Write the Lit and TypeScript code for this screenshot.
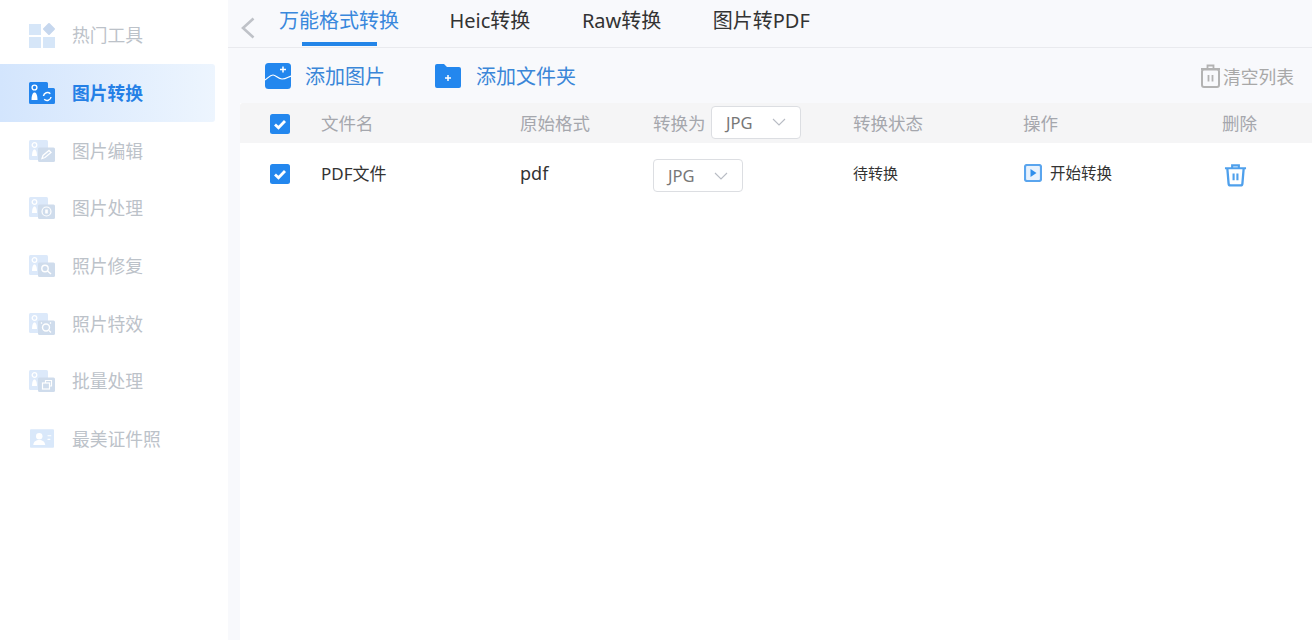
import { LitElement, html, css, svg } from "lit";
import { customElement } from "lit/decorators.js";

const tile = (c: string, inner: unknown) => svg`<svg class="ic" viewBox="0 0 26 22" width="26" height="22">
  <path d="M0 1.500A1.500 1.500 0 0 1 1.500 0h16A1.500 1.500 0 0 1 19 1.500V6h5.500A1.500 1.500 0 0 1 26 7.500V20.500a1.500 1.500 0 0 1-1.500 1.500h-23A1.500 1.500 0 0 1 0 20.500z" fill="${c}"/>${inner}</svg>`;

const base = (sub: unknown) => svg`<svg class="ic" viewBox="0 0 26 22" width="26" height="22">
  <rect x="0" y="0" width="19" height="20" rx="1.500" fill="#dce9fa"/>
  <circle cx="5.500" cy="5" r="2.300" fill="none" stroke="#fff" stroke-width="1.300"/>
  <path d="M3 16c0-4 1-6.500 2.500-6.500S8 12 8 16z" fill="#fff"/>
  <rect x="9" y="7.500" width="17" height="14.500" rx="1.500" fill="#cfdcec"/>${sub}</svg>`;

const icons: Record<string, unknown> = {
  hot: svg`<svg class="ic" viewBox="0 0 26 26" width="26" height="26">
    <rect x="0" y="2" width="12" height="11" fill="#d6e6f8"/><rect x="0" y="15" width="12" height="11" fill="#d6e6f8"/>
    <rect x="14" y="15" width="12" height="11" fill="#d6e6f8"/><rect x="15.500" y="2.500" width="9" height="9" rx="1" fill="#c6d7ee" transform="rotate(45 20 7)"/></svg>`,
  convert: tile("#2385ee", svg`
    <circle cx="5.500" cy="5.500" r="2.400" fill="none" stroke="#fff" stroke-width="1.400"/>
    <path d="M2.500 18c0-5 1.300-7.500 3-7.500s3 2.500 3 7.500z" fill="#fff"/>
    <path d="M14.500 14a4 4 0 0 1 6.800-2.300M22 15a4 4 0 0 1-6.800 2.300" fill="none" stroke="#fff" stroke-width="1.500"/>`),
  edit: base(svg`<path d="M13 18.500l1-3 6-5 2 2-6 5z" fill="none" stroke="#fff" stroke-width="1.300"/>`),
  process: base(svg`<circle cx="17.500" cy="14.500" r="4.500" fill="none" stroke="#fff" stroke-width="1.200"/><rect x="16.200" y="12.500" width="2.600" height="4" fill="#fff"/>`),
  repair: base(svg`<circle cx="16" cy="13.500" r="3.200" fill="none" stroke="#fff" stroke-width="1.400"/><path d="M18.500 16l3.500 3" stroke="#fff" stroke-width="1.600"/>`),
  effect: base(svg`<circle cx="17" cy="14.500" r="3.500" fill="none" stroke="#fff" stroke-width="1.400"/><path d="M20 17.500l2 2M21 10.500l1-1M13 10.500l-1-1" stroke="#fff" stroke-width="1.300"/>`),
  batch: base(svg`<rect x="13.500" y="13" width="7" height="6" fill="none" stroke="#fff" stroke-width="1.200"/><path d="M16.500 13v-2.500h6V16h-2" fill="none" stroke="#fff" stroke-width="1.200"/>`),
  id: svg`<svg class="ic id" viewBox="0 0 26 20" width="24" height="19">
    <rect width="26" height="20" rx="1" fill="#d9e8fa"/><circle cx="10" cy="7.500" r="3.500" fill="#fff"/>
    <path d="M3.500 17c.5-4 3-5.500 6.500-5.500s6 1.500 6.500 5.500z" fill="#fff"/><path d="M19 7h4M19 11h3" stroke="#fff" stroke-width="1.300"/></svg>`,
};

const MENU = [
  ["hot", "热门工具"], ["convert", "图片转换"], ["edit", "图片编辑"], ["process", "图片处理"],
  ["repair", "照片修复"], ["effect", "照片特效"], ["batch", "批量处理"], ["id", "最美证件照"],
];
const TABS = ["万能格式转换", "Heic转换", "Raw转换", "图片转PDF"];

const check = html`<svg class="check" viewBox="0 0 20 20" width="20" height="20">
  <rect width="20" height="20" rx="2.500" fill="#2387ee"/>
  <path d="M5 10.500l3.500 3.300L15 7" fill="none" stroke="#fff" stroke-width="2.800"/></svg>`;

const trash = (c: string, w: number, h: number) => html`<svg viewBox="0 0 24 24" width="${w}" height="${h}">
  <path d="M1 5h22M8.500 4.500V2h7v2.500" fill="none" stroke="${c}" stroke-width="2.200"/>
  <path d="M3.500 5.500l1.300 15.500a2 2 0 0 0 2 1.900h10.400a2 2 0 0 0 2-1.900L20.500 5.500" fill="none" stroke="${c}" stroke-width="2.400"/>
  <path d="M10 10.500v7M14 10.500v7" stroke="${c}" stroke-width="2.200"/></svg>`;

const clearIcon = html`<svg viewBox="0 0 19 24" width="19" height="24">
  <path d="M0 5h19M6.500 4.500V1.500h6v3" fill="none" stroke="#b3b3b3" stroke-width="1.800"/>
  <rect x="1" y="5.500" width="17" height="17.500" rx="2" fill="none" stroke="#b3b3b3" stroke-width="2"/>
  <path d="M7.500 11v6.500M11.500 11v6.500" stroke="#b3b3b3" stroke-width="1.800"/></svg>`;

const select = html`<div class="select"><span>JPG</span>
  <svg viewBox="0 0 14 8" width="14" height="8"><path d="M1 1l6 6 6-6" fill="none" stroke="#b8bcc4" stroke-width="1.100"/></svg></div>`;

@customElement("app-root")
export class AppRoot extends LitElement {
  static styles = css`
    :host { display: block; width: 1312px; height: 640px; overflow: hidden; background: #f8f9fc;
      font-family: "Noto Sans", "Noto Sans CJK SC", sans-serif; }
    .app { display: flex; height: 640px; }
    .side { width: 228px; flex: none; background: #fff; padding-top: 6.300px; box-sizing: border-box; }
    .item { width: 215px; height: 57.700px; display: flex; align-items: center; color: #bcc2c9; font-size: 17.750px; line-height: 24px; }
    .item.on { background: linear-gradient(90deg, #d3e5fd, #edf5fe); color: #2580e6; font-weight: 700; border-radius: 0 3px 3px 0; }
    .icbox { width: 72px; flex: none; padding-left: 29px; box-sizing: border-box; display: flex; }
    .ic { display: block; }
    .ic.id { margin-left: 1px; }
    .main { flex: 1; min-width: 0; display: flex; flex-direction: column; }
    .tabs { height: 47px; flex: none; display: flex; align-items: flex-start; border-bottom: 1px solid #e9eaee; }
    .back { width: 14px; margin: 17px 24px 0 13px; flex: none; display: block; }
    .tablist { display: flex; gap: 51.500px; }
    .tab { font-size: 20px; line-height: 42px; height: 47px; color: #333; position: relative; white-space: nowrap; }
    .tab:first-child { margin-right: -1px; }
    .tab.on { color: #3a88dc; }
    .tab.on::after { content: ""; position: absolute; left: 23px; width: 75px; height: 4px; top: 42px; background: #2385e8; }
    .body { margin-left: 12px; flex: 1; display: flex; flex-direction: column; min-height: 0; }
    .toolbar { height: 55px; flex: none; display: flex; align-items: center; padding: 0 18px 0 25px; font-size: 20px; color: #3a86d8; }
    .tool { display: flex; align-items: center; gap: 14px; margin-right: 50px; }
    .tool.folder { gap: 15px; }
    .tool svg { display: block; }
    .spacer { flex: 1; }
    .clear { display: flex; align-items: center; gap: 3px; font-size: 17.750px; color: #a8a8a8; }
    .clear svg { display: block; }
    .table { flex: 1; background: #fff; }
    .row { display: grid; grid-template-columns: 81px 199px 133px 200px 170px 199px 1fr; align-items: center; }
    .row > :first-child { margin-left: 30px; margin-top: 2px; }
    .head { height: 40px; background: #f5f5f6; color: #a5a7ad; font-size: 17.500px; border-radius: 3px 0 0 0; }
    .head > span, .pair > span { margin-bottom: 2px; }
    .data { height: 60px; font-size: 17px; color: #333; }
    .data > span { margin-bottom: 2px; }
    .data > .pdf { font-size: 18px; margin-bottom: 0; }
    .data > .select { margin-top: 5px; }
    .check { display: block; }
    .pair { display: flex; align-items: center; gap: 5.500px; }
    .pair > .select { margin-top: -2px; }
    .select { width: 90px; height: 33px; box-sizing: border-box; border: 1px solid #dcdee2; border-radius: 4px; background: #fff;
      display: flex; align-items: center; gap: 19px; padding-left: 14px; font-size: 16.500px; color: #777; }
    .data > .status { font-size: 15px; }
    .op { display: flex; align-items: center; gap: 8px; font-size: 15.500px; color: #333; margin-left: 1px; }
    .op span { margin-bottom: 2px; }
    .op svg, .del svg { display: block; }
    .del { margin: 3px 0 0 2px; }
  `;

  render() {
    return html`<div class="app">
      <nav class="side">
        ${MENU.map(([k, t]) => html`<div class="item ${k === "convert" ? "on" : ""}"><div class="icbox">${icons[k]}</div><span>${t}</span></div>`)}
      </nav>
      <div class="main">
        <div class="tabs">
          <svg class="back" viewBox="0 0 14 22" width="14" height="22"><path d="M12.500 1.500L2 11l10.500 9.500" fill="none" stroke="#bfc2c8" stroke-width="2.600"/></svg>
          <div class="tablist">${TABS.map((t, i) => html`<div class="tab ${i === 0 ? "on" : ""}">${t}</div>`)}</div>
        </div>
        <div class="body">
          <div class="toolbar">
            <div class="tool">
              <svg viewBox="0 0 26 26" width="26" height="26"><rect width="26" height="26" rx="3.500" fill="#2387ee"/>
                <path d="M0 17c3-2 5-5 8-5s5 4 9 4 6-2 9-3" fill="none" stroke="#fff" stroke-width="1.200"/>
                <path d="M15 6.500h6M18 3.500v6" stroke="#fff" stroke-width="1.500"/></svg>
              <span>添加图片</span>
            </div>
            <div class="tool folder">
              <svg viewBox="0 0 26 24" width="26" height="24"><path d="M0 2a2 2 0 0 1 2-2h7l3 3h12a2 2 0 0 1 2 2v17a2 2 0 0 1-2 2H2a2 2 0 0 1-2-2z" fill="#2387ee"/>
                <path d="M10 14h6M13 11v6" stroke="#fff" stroke-width="1.500"/></svg>
              <span>添加文件夹</span>
            </div>
            <div class="spacer"></div>
            <div class="clear">${clearIcon}<span>清空列表</span></div>
          </div>
          <div class="table">
            <div class="row head">
              ${check}<span>文件名</span><span>原始格式</span>
              <div class="pair"><span>转换为</span>${select}</div>
              <span>转换状态</span><span>操作</span><span>删除</span>
            </div>
            <div class="row data">
              ${check}<span>PDF文件</span><span class="pdf">pdf</span>
              ${select}
              <span class="status">待转换</span>
              <div class="op"><svg viewBox="0 0 18 18" width="18" height="18"><rect x="1" y="1" width="16" height="16" rx="2" fill="#e8f2fd" stroke="#5aa5ee" stroke-width="2.200"/><path d="M6.500 5l6 4-6 4z" fill="#2f8fec"/></svg><span>开始转换</span></div>
              <div class="del">${trash("#4fa0ec", 23, 24)}</div>
            </div>
          </div>
        </div>
      </div>
    </div>`;
  }
}
